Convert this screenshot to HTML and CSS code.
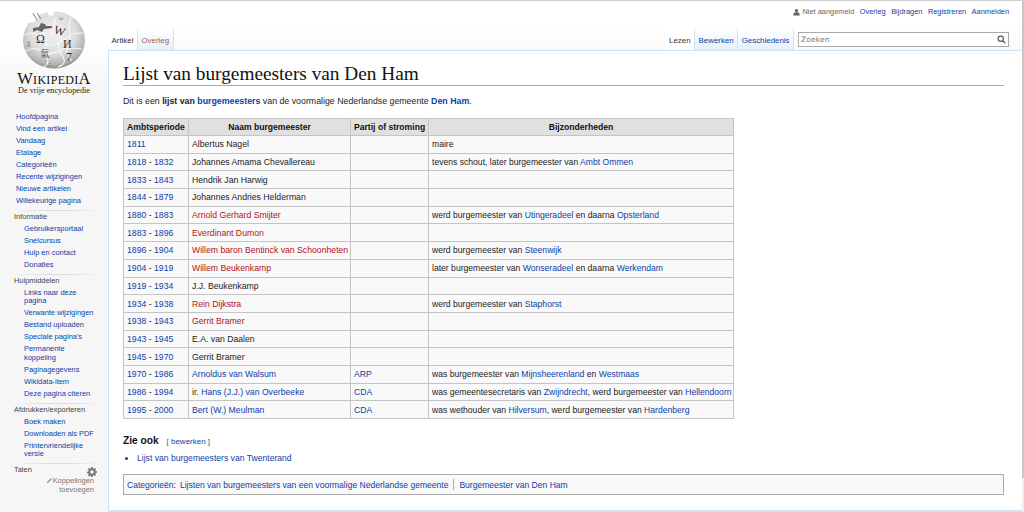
FILE: index.html
```html
<!DOCTYPE html>
<html lang="nl">
<head>
<meta charset="utf-8">
<title>Lijst van burgemeesters van Den Ham</title>
<link rel="stylesheet" href="styles.css">
</head>
<body>
<div class="page">
  <aside class="sidebar">
    <div class="logo">
      <svg class="globe" viewBox="0 0 64 60" width="64" height="60" aria-hidden="true">
        <defs><radialGradient id="g" cx="48%" cy="38%" r="62%"><stop offset="0" stop-color="#f2f2f2"/><stop offset=".6" stop-color="#dcdcdc"/><stop offset=".88" stop-color="#b4b4b4"/><stop offset="1" stop-color="#8c8c8c"/></radialGradient></defs>
        <ellipse cx="32" cy="29" rx="31" ry="28.500" fill="url(#g)"/>
        <path d="M9 2 L17 0 L16 8 L10 12 L5 10Z" fill="#fff"/>
        <path d="M26 0 L32 0 L31 5 L26 4Z" fill="#fff"/>
        <path d="M46 0 L64 0 L64 12 L56 9 L51 4 L46 4Z" fill="#fff"/>
        <path d="M11 2 L15 9 M15 2 L19 8" stroke="#999" stroke-width="1.200"/>
        <path d="M11 17 L17 16 L19 12 L23 13 L24 15 L30 15 L30 17 L22 18 L20 21 L15 19 L11 21Z" fill="#666"/>
        <path d="M3 24 Q12 20 16 25 T24 33 T38 31 T48 24 T61 22 M4 40 Q14 35 20 40 T34 41 T46 37 T60 38 M20 21 Q26 26 24 33 T25 46 T22 56 M34 7 Q30 13 36 20 T38 31 T40 44 T36 56 M49 6 Q46 15 48 24 T46 37 T50 50" fill="none" stroke="#f8f8f8" stroke-width="1.100"/>
        <text x="14" y="32" class="glyph glyph-l">Ω</text>
        <text x="32" y="24" class="glyph glyph-l" transform="rotate(18 38 20)">W</text>
        <text x="41" y="37" class="glyph glyph-l">И</text>
        <text x="44" y="50" class="glyph glyph-l">7</text>
        <text x="18.500" y="46" class="glyph glyph-cjk">氣</text>
        <text x="37" y="9" class="glyph glyph-s">ω</text>
        <text x="5" y="34" class="glyph glyph-s">ვ</text>
        <text x="27" y="55" class="glyph glyph-s">ג</text>
      </svg>
      <div class="wordmark">WikipediA</div>
      <div class="tagline">De vrije encyclopedie</div>
    </div>
    <ul class="nav main-nav">
      <li><a href="#">Hoofdpagina</a></li>
      <li><a href="#">Vind een artikel</a></li>
      <li><a href="#">Vandaag</a></li>
      <li><a href="#">Etalage</a></li>
      <li><a href="#">Categorieën</a></li>
      <li><a href="#">Recente wijzigingen</a></li>
      <li><a href="#">Nieuwe artikelen</a></li>
      <li><a href="#">Willekeurige pagina</a></li>
    </ul>
    <section class="portal">
      <h3>Informatie</h3>
      <ul class="nav">
        <li><a href="#">Gebruikersportaal</a></li>
        <li><a href="#">Snelcursus</a></li>
        <li><a href="#">Hulp en contact</a></li>
        <li><a href="#">Donaties</a></li>
      </ul>
    </section>
    <section class="portal">
      <h3>Hulpmiddelen</h3>
      <ul class="nav">
        <li><a href="#">Links naar deze pagina</a></li>
        <li><a href="#">Verwante wijzigingen</a></li>
        <li><a href="#">Bestand uploaden</a></li>
        <li><a href="#">Speciale pagina's</a></li>
        <li><a href="#">Permanente koppeling</a></li>
        <li><a href="#">Paginagegevens</a></li>
        <li><a href="#">Wikidata-item</a></li>
        <li><a href="#">Deze pagina citeren</a></li>
      </ul>
    </section>
    <section class="portal">
      <h3>Afdrukken/exporteren</h3>
      <ul class="nav">
        <li><a href="#">Boek maken</a></li>
        <li><a href="#">Downloaden als PDF</a></li>
        <li><a href="#">Printervriendelijke versie</a></li>
      </ul>
    </section>
    <section class="portal langs">
      <div class="langs-head">
        <h3>Talen</h3>
        <svg class="gear" viewBox="0 0 20 20" width="10" height="10" aria-hidden="true"><path fill="#777" fill-rule="evenodd" d="M8.5 0h3l.5 2.8 1.6.7L16 1.900l2.100 2.100-1.600 2.400.7 1.600 2.800.5v3l-2.800.5-.7 1.600 1.600 2.400-2.100 2.100-2.400-1.600-1.600.7-.5 2.800h-3L8 18.200l-1.600-.7L4 19.100 1.900 17l1.600-2.400-.7-1.600L0 12.500v-3l2.800-.5.7-1.600L1.900 4 4 1.900l2.400 1.600L8 2.800zM10 6.500a3.500 3.500 0 1 0 0 7 3.500 3.500 0 0 0 0-7z"/></svg>
      </div>
      <div class="add-links">
        <svg class="pencil" viewBox="0 0 10 10" width="7" height="7" aria-hidden="true"><path d="M1 9 L1.500 7 L7 1.500 L8.500 3 L3 8.500Z" fill="#999"/></svg><a href="#">Koppelingen toevoegen</a>
      </div>
    </section>
  </aside>

  <div class="main">
    <div class="personal">
      <svg class="user" viewBox="0 0 10 10" width="7" height="8" aria-hidden="true"><circle cx="5" cy="3" r="2.400" fill="#666"/><path d="M0.500 10 V8 Q1 6 3.500 5.500 H6.500 Q9 6 9.500 8 V10Z" fill="#666"/></svg>
      <span class="muted">Niet aangemeld</span>
      <a href="#">Overleg</a>
      <a href="#">Bijdragen</a>
      <a href="#">Registreren</a>
      <a href="#">Aanmelden</a>
    </div>
    <div class="tabbar">
      <div class="tabs">
        <a href="#" class="tab selected">Artikel</a>
        <a href="#" class="tab missing">Overleg</a>
      </div>
      <div class="tabs">
        <a href="#" class="tab selected">Lezen</a>
        <a href="#" class="tab">Bewerken</a>
        <a href="#" class="tab">Geschiedenis</a>
        <div class="search">
          <span class="search-label">Zoeken</span>
          <svg viewBox="0 0 12 12" width="9" height="9" aria-hidden="true"><circle cx="5" cy="5" r="3.500" fill="none" stroke="#555" stroke-width="1.500"/><path d="M7.500 7.500 L11 11" stroke="#555" stroke-width="1.800"/></svg>
        </div>
      </div>
    </div>
    <main class="content">
      <h1>Lijst van burgemeesters van Den Ham</h1>
      <p class="intro">Dit is een <b>lijst van <a href="#">burgemeesters</a></b> van de voormalige Nederlandse gemeente <a href="#"><b>Den Ham</b></a>.</p>
      <table class="wikitable">
        <thead>
          <tr><th>Ambtsperiode</th><th>Naam burgemeester</th><th>Partij of stroming</th><th>Bijzonderheden</th></tr>
        </thead>
        <tbody>
          <tr><td><a href="#">1811</a></td><td>Albertus Nagel</td><td></td><td>maire</td></tr>
          <tr><td><a href="#">1818</a> - <a href="#">1832</a></td><td>Johannes Amama Chevallereau</td><td></td><td>tevens schout, later burgemeester van <a href="#">Ambt Ommen</a></td></tr>
          <tr><td><a href="#">1833</a> - <a href="#">1843</a></td><td>Hendrik Jan Harwig</td><td></td><td></td></tr>
          <tr><td><a href="#">1844</a> - <a href="#">1879</a></td><td>Johannes Andries Helderman</td><td></td><td></td></tr>
          <tr><td><a href="#">1880</a> - <a href="#">1883</a></td><td><a href="#" class="new">Arnold Gerhard Smijter</a></td><td></td><td>werd burgemeester van <a href="#">Utingeradeel</a> en daarna <a href="#">Opsterland</a></td></tr>
          <tr><td><a href="#">1883</a> - <a href="#">1896</a></td><td><a href="#" class="new">Everdinant Dumon</a></td><td></td><td></td></tr>
          <tr><td><a href="#">1896</a> - <a href="#">1904</a></td><td><a href="#" class="new">Willem baron Bentinck van Schoonheten</a></td><td></td><td>werd burgemeester van <a href="#">Steenwijk</a></td></tr>
          <tr><td><a href="#">1904</a> - <a href="#">1919</a></td><td><a href="#" class="new">Willem Beukenkamp</a></td><td></td><td>later burgemeester van <a href="#">Wonseradeel</a> en daarna <a href="#">Werkendam</a></td></tr>
          <tr><td><a href="#">1919</a> - <a href="#">1934</a></td><td>J.J. Beukenkamp</td><td></td><td></td></tr>
          <tr><td><a href="#">1934</a> - <a href="#">1938</a></td><td><a href="#" class="new">Rein Dijkstra</a></td><td></td><td>werd burgemeester van <a href="#">Staphorst</a></td></tr>
          <tr><td><a href="#">1938</a> - <a href="#">1943</a></td><td><a href="#" class="new">Gerrit Bramer</a></td><td></td><td></td></tr>
          <tr><td><a href="#">1943</a> - <a href="#">1945</a></td><td>E.A. van Daalen</td><td></td><td></td></tr>
          <tr><td><a href="#">1945</a> - <a href="#">1970</a></td><td>Gerrit Bramer</td><td></td><td></td></tr>
          <tr><td><a href="#">1970</a> - <a href="#">1986</a></td><td><a href="#">Arnoldus van Walsum</a></td><td><a href="#">ARP</a></td><td>was burgemeester van <a href="#">Mijnsheerenland</a> en <a href="#">Westmaas</a></td></tr>
          <tr><td><a href="#">1986</a> - <a href="#">1994</a></td><td>ir. <a href="#">Hans (J.J.) van Overbeeke</a></td><td><a href="#">CDA</a></td><td>was gemeentesecretaris van <a href="#">Zwijndrecht</a>, werd burgemeester van <a href="#">Hellendoorn</a></td></tr>
          <tr><td><a href="#">1995</a> - <a href="#">2000</a></td><td><a href="#">Bert (W.) Meulman</a></td><td><a href="#">CDA</a></td><td>was wethouder van <a href="#">Hilversum</a>, werd burgemeester van <a href="#">Hardenberg</a></td></tr>
        </tbody>
      </table>
      <h2>Zie ook <span class="edit">[ <a href="#">bewerken</a> ]</span></h2>
      <ul class="list">
        <li><a href="#">Lijst van burgemeesters van Twenterand</a></li>
      </ul>
      <div class="catlinks">
        <span><a href="#">Categorieën</a>:</span>
        <a href="#">Lijsten van burgemeesters van een voormalige Nederlandse gemeente</a>
        <span class="sep"></span>
        <a href="#">Burgemeester van Den Ham</a>
      </div>
    </main>
  </div>
  <div class="scroll-edge"></div>
</div>
</body>
</html>
```
FILE: styles.css
```css
* { box-sizing: border-box; }
html, body { margin: 0; padding: 0; height: 100%; overflow: hidden; }
body {
  background: #f6f6f6;
  font-family: "Liberation Sans", Arial, sans-serif;
  color: #222;
  border-top: 1px solid #cfcfcf;
}
a { color: #0b3fa8; text-decoration: none; }
a.new { color: #b5101a; }
ul { list-style: none; margin: 0; padding: 0; }

.page { display: flex; height: 511px; }
.scroll-edge { width: 2px; flex: none; background: linear-gradient(#c6c6c6 477px, #eee 477px); }

.sidebar { width: 108px; flex: none; font-size: 7.450px; background: linear-gradient(#fff 40px, #f6f6f6 85px); }
.logo { height: 106px; display: flex; flex-direction: column; align-items: center; padding-top: 10px; }
.globe { display: block; }
.glyph { font-family: "Liberation Serif", serif; fill: #333; }
.glyph-l { font-size: 12px; }
.glyph-s { font-size: 6px; fill: #666; }
.glyph-cjk { font: 9px "Noto Sans CJK TC", sans-serif; fill: #555; }
.wordmark { font: 16.500px/12px "Liberation Serif", serif; font-variant: small-caps; letter-spacing: .3px; color: #111; margin-top: 2px; white-space: nowrap; }
.tagline { font: 8.200px/9px "Liberation Serif", serif; color: #222; margin-top: 1px; white-space: nowrap; }

.nav li { line-height: 8.400px; padding: 1.800px 0; }
.main-nav { padding: 4px 8px 0 16px; }
.portal { margin: 3px 8px 0 14px; padding-top: 2px; background: linear-gradient(90deg, transparent, #ddd 35%, #ddd 65%, transparent) top / 100% 1px no-repeat; }
.portal h3 { margin: 0 0 1px; font-size: 7.450px; font-weight: normal; line-height: 10px; color: #444; }
.portal .nav { padding: 0 4px 0 10px; }
.langs-head { display: flex; justify-content: space-between; align-items: flex-end; }
.gear { margin: 0 3px -1px 0; }
.add-links { text-align: right; line-height: 9px; padding: 0 6px 0 20px; }
.add-links a { color: #777; }
.pencil { vertical-align: -1px; }

.main { flex: 1; min-width: 0; display: flex; flex-direction: column; background: linear-gradient(#fff 25px, #f8f8f8 60px); }
.personal { height: 28px; display: flex; align-items: flex-start; justify-content: flex-end; gap: 5.500px; padding: 6px 13px 0 0; font-size: 7.400px; line-height: 9px; }
.personal .muted { color: #666; margin-left: -3px; }
.user { margin-top: 1px; }

.tabbar { height: 21px; display: flex; justify-content: space-between; }
.tabs { display: flex; align-items: stretch; }
.tab { font-size: 7.900px; line-height: 9px; padding: 7px 3.500px 0; color: #0b3fa8; border-right: 1px solid #cfe3f3; background: linear-gradient(#fff, #e6f0fa); }
.tab.selected { color: #333; background: #fff; }
.tab.missing { color: #a55858; }
.search { width: 211px; height: 15px; margin: 3px 13px 0 4px; border: 1px solid #aaa; background: #fff; display: flex; align-items: center; justify-content: space-between; padding: 0 2px; }
.search-label { font: 7.400px "DejaVu Sans", sans-serif; color: #777; letter-spacing: .2px; }

.content { flex: 1; min-height: 0; background: #fff; border: 1px solid #cfe3f3; border-right: 0; border-bottom-width: 2px; padding: 12px 18px 0 14px; font-size: 8.800px; }
h1 { margin: 0; font: normal 19.300px/22px "Liberation Serif", serif; color: #111; border-bottom: 1px solid #aaa; }
.intro { margin: 10px 0 0; line-height: 11px; color: #222; }
.wikitable { margin-top: 11px; border-collapse: collapse; width: 611px; background: #f9f9f9; color: #222; table-layout: fixed; border: 1px solid #aaa; font-size: 8.680px; }
.wikitable th, .wikitable td { border: 1px solid #c4c4c4; padding: 0 3px; height: 17.700px; line-height: 10px; white-space: nowrap; }
.wikitable td:nth-child(4) { font-size: 8.600px; }
.wikitable th { background: #e0e0e0; color: #111; text-align: center; height: 17px; font-size: 8.600px; }
.wikitable th:nth-child(1) { width: 65px; }
.wikitable th:nth-child(2) { width: 162px; }
.wikitable th:nth-child(3) { width: 78px; }
h2 { margin: 16px 0 0; font-size: 10.200px; line-height: 12px; color: #111; }
.edit { font-size: 8px; font-weight: normal; margin-left: 5px; color: #555; }
.list { margin: 5px 0 0 14px; color: #0b3fa8; line-height: 11px; font-size: 8.600px; }
.list li { list-style: disc; }
.catlinks { margin-top: 10px; height: 21px; border: 1px solid #aaa; background: #f9f9f9; padding: 0 3px; display: flex; align-items: center; gap: 4px; white-space: nowrap; font-size: 8.550px; }
.sep { width: 1px; height: 11px; background: #aaa; margin: 0 1px; }
```
